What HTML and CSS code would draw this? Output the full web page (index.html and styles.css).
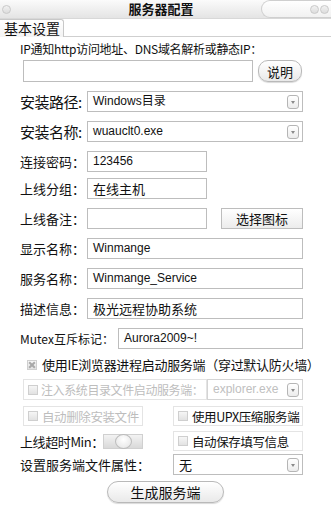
FILE: index.html
```html
<!DOCTYPE html>
<html lang="zh-CN">
<head>
    <meta charset="UTF-8">
    <meta name="viewport" content="width=device-width, initial-scale=1.0">
    <title>服务器配置</title>
    <link rel="stylesheet" href="styles.css">
</head>
<body>
    <div class="window">
        <div class="titlebar">
            <span class="dot dot-left"></span>
            <span class="title">服务器配置</span>
            <div class="title-right">
                <span class="dot"></span>
                <span class="dot"></span>
            </div>
        </div>
        <div class="tabs">
            <div class="tab">基本设置</div>
            <div class="tab-line"></div>
        </div>

        <div class="form">
            <div class="row r-ip">IP通知http访问地址、DNS域名解析或静态IP：</div>
            <div class="row r-url">
                <input type="text" class="box url-input">
                <button class="pill-btn help-btn">说明</button>
            </div>

            <div class="row r-big">
                <label class="big-label">安装路径:</label>
                <div class="box select wide">Windows目录<span class="arrow"></span></div>
            </div>
            <div class="row r-big">
                <label class="big-label">安装名称:</label>
                <div class="box select wide">wuauclt0.exe<span class="arrow"></span></div>
            </div>

            <div class="row r-std">
                <label class="label">连接密码：</label>
                <div class="box short">123456</div>
            </div>
            <div class="row r-group">
                <label class="label">上线分组：</label>
                <div class="box short cn">在线主机</div>
            </div>
            <div class="row r-std">
                <label class="label">上线备注：</label>
                <div class="box short"></div>
                <button class="flat-btn">选择图标</button>
            </div>
            <div class="row r-std">
                <label class="label">显示名称：</label>
                <div class="box wide">Winmange</div>
            </div>
            <div class="row r-std">
                <label class="label">服务名称：</label>
                <div class="box wide">Winmange_Service</div>
            </div>
            <div class="row r-std">
                <label class="label">描述信息：</label>
                <div class="box wide cn">极光远程协助系统</div>
            </div>
            <div class="row r-std">
                <label class="label mutex">Mutex互斥标记：</label>
                <div class="box mutex-box">Aurora2009~!</div>
            </div>

            <div class="row r-cb1">
                <div class="check ie-check"><span class="cb checked"></span>使用IE浏览器进程启动服务端（穿过默认防火墙）</div>
            </div>
            <div class="row r-cb2">
                <div class="check framed disabled inject"><span class="cb"></span>注入系统目录文件启动服务端：</div>
                <div class="box select proc disabled">explorer.exe<span class="arrow"></span></div>
            </div>
            <div class="row r-cb3">
                <div class="check framed disabled half-left"><span class="cb"></span>自动删除安装文件</div>
                <div class="check framed half-right"><span class="cb"></span>使用UPX压缩服务端</div>
            </div>
            <div class="row r-cb4">
                <label class="label timeout">上线超时Min：</label>
                <div class="slider"><span class="knob"></span></div>
                <div class="check framed half-right"><span class="cb"></span>自动保存填写信息</div>
            </div>
            <div class="row r-attr">
                <label class="label attr-label">设置服务端文件属性：</label>
                <div class="box select half-select cn">无<span class="arrow"></span></div>
            </div>
            <div class="row r-build">
                <button class="pill-btn build-btn">生成服务端</button>
            </div>
        </div>
    </div>
</body>
</html>
```

FILE: styles.css
```css
* {
    margin: 0;
    padding: 0;
    box-sizing: border-box;
}
body {
    font-family: "Noto Sans CJK SC", "Liberation Sans", sans-serif;
    background-color: #ffffff;
    color: #111;
    width: 331px;
    height: 517px;
    overflow: hidden;
}
.window {
    width: 331px;
}
.titlebar {
    height: 19px;
    display: flex;
    align-items: center;
    background: linear-gradient(#fbfbfb, #e4e4e4);
    border-bottom: 1px solid #d8d8d8;
}
.dot {
    width: 9px;
    height: 9px;
    border-radius: 50%;
    border: 1px solid #c9c9c9;
    background: linear-gradient(#f2f2f2, #dcdcdc);
    display: inline-block;
}
.dot-left {
    margin-left: 2px;
}
.title {
    flex: 1;
    text-align: center;
    font-size: 13px;
    font-weight: bold;
    margin-left: 50px;
    line-height: 18px;
}
.title-right {
    width: 70px;
    height: 18px;
    background: linear-gradient(#ffffff, #f1f1f1);
    border: 1px solid #cfcfcf;
    border-right: none;
    border-radius: 9px 0 0 9px;
    display: flex;
    justify-content: flex-end;
    align-items: center;
    gap: 1px;
    padding-right: 2px;
}
.tabs {
    height: 18px;
    display: flex;
    align-items: flex-end;
}
.tab {
    width: 64px;
    height: 18px;
    font-size: 14px;
    line-height: 16px;
    padding-left: 4px;
    border: 1px solid #c8c8c8;
    border-bottom: none;
    border-left: none;
    border-radius: 0 3px 0 0;
    background: linear-gradient(#ffffff, #f3f3f3);
}
.tab-line {
    flex: 1;
    border-bottom: 1px solid #cfcfcf;
}
.form {
    display: flex;
    flex-direction: column;
    padding-left: 20px;
    width: 331px;
}
.row {
    display: flex;
    align-items: center;
}
.r-ip {
    height: 16px;
    margin-top: 3px;
    font-size: 12px;
    letter-spacing: -0.3px;
}
.r-url {
    height: 22px;
    margin-top: 4px;
}
.r-big,
.r-std {
    height: 21px;
    margin-top: 9px;
}
.r-group {
    height: 21px;
    margin-top: 6px;
}
.r-cb1 {
    height: 19px;
    margin-top: 6px;
}
.r-cb2 {
    height: 21px;
    margin-top: 5px;
}
.r-cb3 {
    height: 20px;
    margin-top: 6px;
}
.r-cb4 {
    height: 20px;
    margin-top: 5px;
}
.r-attr {
    height: 21px;
    margin-top: 3px;
}
.r-build {
    height: 22px;
    margin-top: 6px;
}
.box {
    height: 21px;
    border: 1px solid #bdbdbd;
    background: #fff;
    font-family: "Liberation Sans", "Noto Sans CJK SC", sans-serif;
    font-size: 12px;
    line-height: 19px;
    padding-left: 5px;
    position: relative;
    white-space: nowrap;
}
.box.cn {
    font-family: "Noto Sans CJK SC", sans-serif;
    font-size: 13px;
}
.url-input {
    margin-left: 3px;
    width: 230px;
    height: 22px;
}
.pill-btn {
    border: 1px solid #b9b9b9;
    border-radius: 10px;
    background: linear-gradient(#ffffff, #e9e9e9);
    box-shadow: 0 1px 1px rgba(0, 0, 0, 0.15);
    font-family: "Noto Sans CJK SC", sans-serif;
    font-size: 13px;
    color: #111;
}
.help-btn {
    width: 44px;
    height: 22px;
    margin-left: 5px;
}
.big-label {
    width: 67px;
    font-size: 15px;
    letter-spacing: -0.5px;
    white-space: nowrap;
}
.label {
    width: 67px;
    font-size: 13px;
    white-space: nowrap;
}
.wide {
    width: 216px;
}
.short {
    width: 120px;
}
.select .arrow {
    position: absolute;
    right: 3px;
    top: 3px;
    width: 12px;
    height: 14px;
    border: 1px solid #b5b5b5;
    border-radius: 3px;
    background: linear-gradient(#ffffff, #ececec);
}
.select .arrow::after {
    content: "";
    position: absolute;
    left: 3px;
    top: 5px;
    border-left: 2.5px solid transparent;
    border-right: 2.5px solid transparent;
    border-top: 3px solid #8a8a8a;
}
.flat-btn {
    width: 82px;
    height: 21px;
    margin-left: 14px;
    border: 1px solid #bdbdbd;
    background: linear-gradient(#ffffff, #ececec);
    font-family: "Noto Sans CJK SC", sans-serif;
    font-size: 13px;
    color: #111;
}
.label.mutex {
    width: 98px;
    font-size: 12px;
}
.mutex-box {
    width: 185px;
}
.check {
    display: flex;
    align-items: center;
    font-size: 13px;
    white-space: nowrap;
    height: 20px;
}
.check.framed {
    border: 1px solid #e4e4e4;
    padding-left: 4px;
    font-size: 12.5px;
    letter-spacing: -0.4px;
}
.check.framed .cb {
    margin-right: 4px;
}
.check.disabled {
    color: #bdbdbd;
}
.ie-check {
    margin-left: 7px;
    letter-spacing: -0.3px;
}
.cb {
    width: 10px;
    height: 10px;
    border: 1px solid #cfcfcf;
    background: linear-gradient(#f6f6f6, #e2e2e2);
    margin-right: 5px;
    position: relative;
    flex-shrink: 0;
}
.cb.checked::before,
.cb.checked::after {
    content: "";
    position: absolute;
    left: 0;
    top: 3px;
    width: 8px;
    height: 2px;
    background: #a8a8a8;
    transform: rotate(45deg);
}
.cb.checked::after {
    transform: rotate(-45deg);
}
.inject {
    margin-left: 3px;
    width: 184px;
    height: 21px;
}
.check.inject {
    font-size: 12px;
}
.check.inject .cb {
    margin-right: 3px;
}
.proc {
    width: 96px;
    color: #c0c0c0;
    border-color: #d4d4d4;
}
.half-left {
    margin-left: 3px;
    width: 120px;
}
.half-right {
    margin-left: auto;
    margin-right: 28px;
    width: 130px;
}
.label.timeout {
    width: 83px;
    letter-spacing: -0.4px;
}
.slider {
    width: 40px;
    height: 15px;
    border: 1px solid #d0d0d0;
    background: linear-gradient(#f3f3f3, #d9d9d9);
    display: flex;
    justify-content: center;
    align-items: center;
}
.knob {
    width: 17px;
    height: 15px;
    border-radius: 50%;
    border: 1px solid #bdbdbd;
    background: radial-gradient(circle at 50% 35%, #ffffff, #e2e2e2);
}
.label.attr-label {
    width: 153px;
}
.half-select {
    width: 130px;
}
.build-btn {
    width: 117px;
    height: 22px;
    margin-left: 87px;
    border-radius: 11px;
    font-size: 14px;
}
```
